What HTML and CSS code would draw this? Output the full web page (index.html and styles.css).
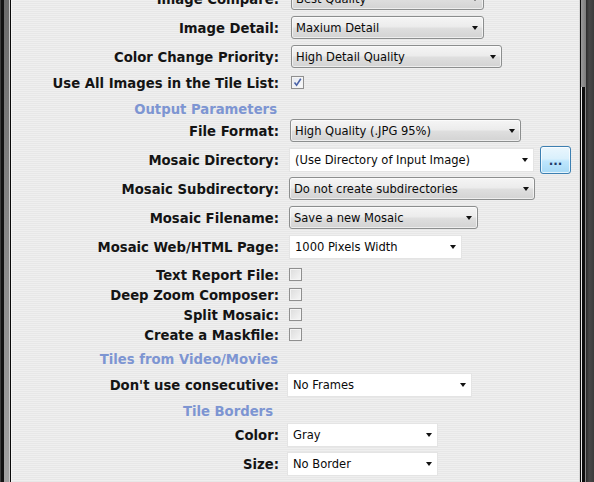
FILE: index.html
```html
<!DOCTYPE html>
<html>
<head>
<meta charset="utf-8">
<link rel="stylesheet" href="styles.css">
</head>
<body>
<div class="window">
  <div class="frame-left">
    <div class="fl-a"></div><div class="fl-b"></div><div class="fl-c"></div><div class="fl-d"></div><div class="fl-e"></div><div class="fl-f"></div>
  </div>
  <div class="content">
    <div class="form">
      <div class="row sel-row">
        <div class="label">Image Compare:</div>
        <div class="ctl"><div class="select gray w193 ml2"><span>Best Quality</span><span class="arrow"></span></div></div>
      </div>
      <div class="row sel-row">
        <div class="label">Image Detail:</div>
        <div class="ctl"><div class="select gray w193 ml2"><span>Maxium Detail</span><span class="arrow"></span></div></div>
      </div>
      <div class="row sel-row">
        <div class="label">Color Change Priority:</div>
        <div class="ctl"><div class="select gray w211 ml2"><span>High Detail Quality</span><span class="arrow"></span></div></div>
      </div>
      <div class="row chk-row mt1">
        <div class="label">Use All Images in the Tile List:</div>
        <div class="ctl"><div class="check checked ml2"><svg width="11" height="11" viewBox="0 0 11 11"><path d="M2.5 5.5 L4.6 8.2 L8.8 1.8" fill="none" stroke="#4b63a8" stroke-width="1.6"/></svg></div></div>
      </div>
      <div class="head head-out">Output Parameters</div>
      <div class="row sel-row">
        <div class="label">File Format:</div>
        <div class="ctl"><div class="select gray w231 ml1"><span>High Quality (.JPG 95%)</span><span class="arrow"></span></div></div>
      </div>
      <div class="row sel-row">
        <div class="label">Mosaic Directory:</div>
        <div class="ctl">
          <div class="select white w245"><span>(Use Directory of Input Image)</span><span class="arrow"></span></div>
          <div class="btn"><span class="dots">...</span></div>
        </div>
      </div>
      <div class="row sel-row">
        <div class="label">Mosaic Subdirectory:</div>
        <div class="ctl"><div class="select gray w246"><span>Do not create subdirectories</span><span class="arrow"></span></div></div>
      </div>
      <div class="row sel-row">
        <div class="label">Mosaic Filename:</div>
        <div class="ctl"><div class="select gray w189"><span>Save a new Mosaic</span><span class="arrow"></span></div></div>
      </div>
      <div class="row sel-row">
        <div class="label">Mosaic Web/HTML Page:</div>
        <div class="ctl"><div class="select white w173"><span>1000 Pixels Width</span><span class="arrow"></span></div></div>
      </div>
      <div class="row chk-row mt3">
        <div class="label">Text Report File:</div>
        <div class="ctl"><div class="check"></div></div>
      </div>
      <div class="row chk-row">
        <div class="label">Deep Zoom Composer:</div>
        <div class="ctl"><div class="check"></div></div>
      </div>
      <div class="row chk-row">
        <div class="label">Split Mosaic:</div>
        <div class="ctl"><div class="check"></div></div>
      </div>
      <div class="row chk-row">
        <div class="label">Create a Maskfile:</div>
        <div class="ctl"><div class="check"></div></div>
      </div>
      <div class="head head-tiles">Tiles from Video/Movies</div>
      <div class="row sel-row">
        <div class="label">Don't use consecutive:</div>
        <div class="ctl"><div class="select white w185 mlm2"><span>No Frames</span><span class="arrow"></span></div></div>
      </div>
      <div class="head head-tb">Tile Borders</div>
      <div class="row sel-row">
        <div class="label">Color:</div>
        <div class="ctl"><div class="select white w151 mlm2"><span>Gray</span><span class="arrow"></span></div></div>
      </div>
      <div class="row sel-row">
        <div class="label">Size:</div>
        <div class="ctl"><div class="select white w151 mlm2"><span>No Border</span><span class="arrow"></span></div></div>
      </div>
    </div>
  </div>
  <div class="frame-right">
    <div class="fr-a"></div><div class="fr-b"></div>
    <div class="fr-track"><div class="track-top"></div><div class="thumb"></div></div>
    <div class="fr-c"></div>
  </div>
</div>
</body>
</html>
```
FILE: styles.css
```css
html, body {
  margin: 0;
  padding: 0;
  width: 594px;
  height: 482px;
  overflow: hidden;
}

.window {
  display: flex;
  height: 482px;
  width: 594px;
}

/* left window frame */
.frame-left {
  display: flex;
  width: 12px;
  flex: 0 0 12px;
}
.fl-a { width: 1px; background: #3e3e3e; }
.fl-b { width: 3px; background: #121212; }
.fl-c { width: 5px; background: linear-gradient(#6c6c6c, #8e8e8e 60%, #a2a2a2); }
.fl-d { width: 1px; background: #c9c9c9; }
.fl-e { width: 1px; background: #0a0a0a; }
.fl-f { width: 1px; background: #f4f4f4; }

/* right window frame + scrollbar */
.frame-right {
  display: flex;
  width: 15px;
  flex: 0 0 15px;
}
.fr-a { width: 1px; background: #d6d6d6; }
.fr-b { width: 1px; background: #0c0c0c; }
.fr-track {
  width: 5px;
  display: flex;
  flex-direction: column;
}
.track-top {
  height: 87px;
  background: linear-gradient(90deg, #9a9a9a, #7d7d7d);
}
.thumb {
  flex: 1;
  background: linear-gradient(90deg, #e8e8e8 0 1px, #0d0d0d 1px 4px, #8a8a8a 4px);
}
.fr-c {
  flex: 1;
  background: linear-gradient(90deg, #2c2c2c, #474747 40%, #3a3a3a);
}

/* content area */
.content {
  flex: 1;
  overflow: hidden;
  background: repeating-linear-gradient(180deg, #efefef 0 1px, #e7e7e7 1px 2px);
}

.form {
  display: flex;
  flex-direction: column;
  margin-top: -16px;
}

.row {
  display: grid;
  grid-template-columns: 267px auto;
  column-gap: 10px;
  align-items: center;
}
.sel-row { height: 29px; }
.chk-row { height: 20px; }
.mt1 { margin-top: 1px; }
.mt3 { margin-top: 3px; }

.label {
  text-align: right;
  font-family: "DejaVu Sans", sans-serif;
  font-stretch: condensed;
  font-weight: bold;
  font-size: 14.7px;
  color: #141414;
  white-space: nowrap;
  line-height: 17px;
}

.head {
  width: 267px;
  text-align: right;
  font-family: "DejaVu Sans", sans-serif;
  font-stretch: condensed;
  font-weight: bold;
  font-size: 14.7px;
  line-height: 17px;
  height: 17px;
  color: #7d95d2;
  white-space: nowrap;
}
.head-out { margin: 8px 0 -1px; padding-right: 2px; box-sizing: border-box; }
.head-tiles { margin: 6px 0 3px; padding-right: 1px; box-sizing: border-box; }
.head-tb { margin: 3px 0 1px; padding-right: 6px; box-sizing: border-box; }

.ctl {
  display: flex;
  align-items: center;
  gap: 6px;
}

.select {
  box-sizing: border-box;
  display: flex;
  align-items: center;
  justify-content: space-between;
  padding: 0 5px 0 4px;
  font-family: "DejaVu Sans", sans-serif;
  font-stretch: condensed;
  font-size: 12.8px;
  color: #0a0a0a;
  white-space: nowrap;
}
.select.gray {
  height: 23px;
  border: 1px solid #8c8e8e;
  border-radius: 3px;
  background: linear-gradient(#f5f5f5, #ececec 45%, #dedede 55%, #d3d3d3);
  box-shadow: inset 0 0 0 1px rgba(255,255,255,0.6);
}
.select.white {
  height: 24px;
  border: 1px solid #e4e4e4;
  background: #ffffff;
  padding-left: 5px;
}

.arrow {
  width: 0;
  height: 0;
  border-left: 3.5px solid transparent;
  border-right: 3.5px solid transparent;
  border-top: 4px solid #111;
  margin-top: 1px;
}

.w151 { width: 151px; }
.w173 { width: 173px; }
.w185 { width: 185px; }
.w189 { width: 189px; }
.w193 { width: 193px; }
.w211 { width: 211px; }
.w231 { width: 231px; }
.w245 { width: 245px; }
.w246 { width: 246px; }
.ml1 { margin-left: 1px; }
.ml2 { margin-left: 2px; }
.mlm2 { margin-left: -2px; }

.btn {
  box-sizing: border-box;
  width: 31px;
  height: 28px;
  border: 1px solid #3c7fb1;
  border-radius: 3px;
  background: linear-gradient(#eaf6fd, #d9f0fc 45%, #bee6fd 55%, #a7d9f5);
  box-shadow: inset 0 0 0 1px rgba(255,255,255,0.7);
  display: flex;
  align-items: center;
  justify-content: center;
}
.dots {
  font-family: "DejaVu Sans", sans-serif;
  font-weight: bold;
  font-size: 12px;
  color: #1d3a66;
  letter-spacing: 0;
  line-height: 12px;
  margin-top: 2px;
}

.check {
  box-sizing: border-box;
  width: 13px;
  height: 13px;
  border: 1px solid #8f8f8f;
  background: linear-gradient(135deg, #dcdcdc, #f6f6f6);
  box-shadow: inset 0 0 0 1px #f4f4f4;
  display: flex;
  align-items: center;
  justify-content: center;
}
.check.checked {
  background: linear-gradient(135deg, #e4e8f0, #fbfbfb);
}
```
